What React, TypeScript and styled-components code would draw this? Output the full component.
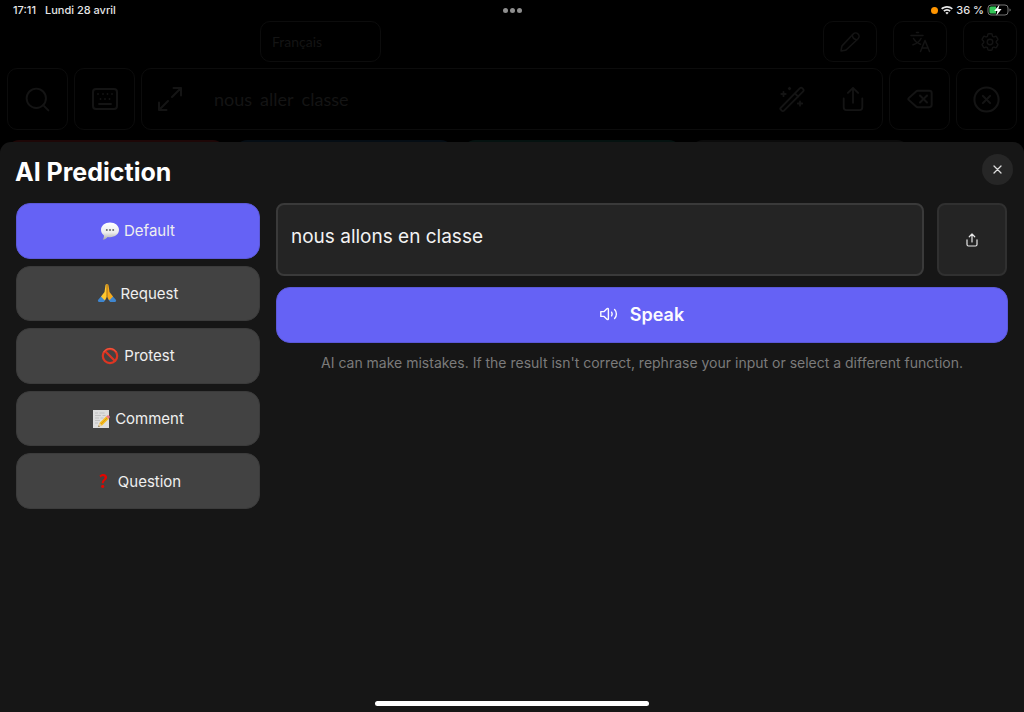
import React, { useState } from "react";
import styled, { createGlobalStyle } from "styled-components";
import { Search, Delete, CircleX } from "lucide-react";
import { HiOutlineCog6Tooth } from "react-icons/hi2";

const GlobalStyle = createGlobalStyle`
  * { box-sizing: border-box; }
  html, body { margin: 0; background: #000; }
  body { font-family: Inter, "Liberation Sans", sans-serif; color: #fff; }
  button, input, select, textarea { font: inherit; color: inherit; }
  svg { display: block; flex: none; }
`;

const Screen = styled.div`
  min-height: 100vh;
  display: flex;
  flex-direction: column;
  background: #000;
`;

const StatusBar = styled.header`
  display: grid;
  grid-template-columns: 1fr auto 1fr;
  align-items: center;
  height: 21px;
  padding: 0 13px 1px;
  font-size: 11px;
  line-height: 14px;
  font-weight: 500;
  color: #e6e6e6;
`;

const StatusGroup = styled.div<{ $end?: boolean; $gap: number }>`
  display: flex;
  align-items: center;
  gap: ${(p) => p.$gap}px;
  justify-content: ${(p) => (p.$end ? "flex-end" : "flex-start")};
`;

const Dots = styled.div`
  display: flex;
  gap: 2px;
`;

const Dot = styled.i<{ $size: number; $color: string }>`
  width: ${(p) => p.$size}px;
  height: ${(p) => p.$size}px;
  border-radius: 50%;
  background: ${(p) => p.$color};
`;

const Backdrop = styled.div`
  color: #141414;
  font-family: Lato, sans-serif;
`;

const TopTools = styled.div`
  display: grid;
  grid-template-columns: 1fr auto;
  align-items: center;
  padding: 0 7px 0 260px;
`;

const LanguageSelect = styled.select`
  appearance: none;
  width: 121px;
  height: 41px;
  padding: 0 11px;
  border: 1px solid #0c0c0c;
  border-radius: 10px;
  background: transparent;
  font-size: 14px;
`;

const ToolGroup = styled.div`
  display: flex;
  gap: 16px;
`;

const ToolButton = styled.button`
  width: 54px;
  height: 41px;
  display: grid;
  place-items: center;
  padding: 0;
  border: 1px solid #0c0c0c;
  border-radius: 10px;
  background: transparent;
`;

const ComposeRow = styled.div`
  display: flex;
  gap: 6px;
  padding: 6px 7px 0;
`;

const SquareButton = styled(ToolButton)`
  width: 61px;
  height: 62px;
`;

const Sentence = styled.div`
  flex: 1;
  height: 62px;
  display: flex;
  align-items: center;
  padding: 0 16px;
  border: 1px solid #0c0c0c;
  border-radius: 10px;
`;

const Words = styled.div`
  flex: 1;
  display: flex;
  gap: 8px;
  padding-left: 32px;
  font-size: 18px;
`;

const BareButton = styled.button`
  display: block;
  padding: 0;
  border: 0;
  background: none;
`;

const SentenceActions = styled.div`
  display: flex;
  gap: 35px;
`;

const Tiles = styled.div`
  display: grid;
  grid-template-columns: repeat(4, 218px) 1fr;
  gap: 10px;
  height: 12px;
  padding: 0 7px;
  margin: 10px 0 -10px;
`;

const Tile = styled.div<{ $color: string }>`
  border-radius: 12px 12px 0 0;
  background: ${(p) => p.$color};
`;

const Sheet = styled.main`
  flex: 1;
  position: relative;
  display: flex;
  flex-direction: column;
  border-radius: 11px 11px 0 0;
  background: #161616;
`;

const SheetHeader = styled.div`
  display: flex;
  justify-content: space-between;
  align-items: flex-start;
  padding: 12px 11px 0 15px;
  height: 61px;
`;

const Title = styled.h1`
  margin: 0;
  padding-top: 2px;
  font-size: 25px;
  line-height: 32px;
  font-weight: 700;
`;

const CloseButton = styled.button`
  width: 31px;
  height: 31px;
  display: grid;
  place-items: center;
  padding: 0;
  border: 0;
  border-radius: 50%;
  background: #262626;
  color: #dcdcdc;
`;

const Content = styled.div`
  flex: 1;
  display: grid;
  grid-template-columns: 1fr 3fr;
  gap: 16px;
  align-items: start;
  padding: 0 16px;
`;

const Modes = styled.nav`
  display: grid;
  grid-template-rows: repeat(5, 1fr);
  gap: 7px;
  height: 306px;
`;

const ModeButton = styled.button<{ $active: boolean }>`
  display: flex;
  align-items: center;
  justify-content: center;
  gap: 4px;
  padding: 0 1px 0 0;
  border: 1px solid ${(p) => (p.$active ? "#5b58d8" : "#3b3b3b")};
  border-radius: 14px;
  background: ${(p) => (p.$active ? "#6562f5" : "#424242")};
  color: #efefef;
  font-size: 15px;
`;

const Panel = styled.section`
  display: flex;
  flex-direction: column;
`;

const ResultRow = styled.div`
  display: flex;
  gap: 13px;
  padding-right: 1px;
`;

const Result = styled.textarea`
  flex: 1;
  min-width: 0;
  height: 73px;
  padding: 20px 13px;
  border: 2px solid #3a3a3a;
  border-radius: 8px;
  outline: 0;
  resize: none;
  overflow: hidden;
  background: #242424;
  color: #f2f2f2;
  font-size: 19px;
  line-height: 24px;
`;

const ShareButton = styled.button`
  width: 70px;
  height: 73px;
  display: grid;
  place-items: center;
  padding: 0;
  border: 2px solid #303030;
  border-radius: 8px;
  background: #242424;
  color: #e8e8e8;
`;

const SpeakButton = styled.button`
  display: flex;
  align-items: center;
  justify-content: center;
  gap: 12px;
  height: 56px;
  margin-top: 11px;
  padding: 0 0 2px;
  border: 1px solid #5b58d8;
  border-radius: 14px;
  background: #6562f5;
  color: #fbfbff;
  font-size: 18px;
  font-weight: 600;
`;

const Notice = styled.p`
  margin: 10px 0 0;
  color: #7b7b7b;
  font-size: 14px;
  line-height: 20px;
  text-align: center;
`;

const HomeIndicator = styled.div`
  width: 274px;
  height: 5px;
  margin: 0 auto 6px;
  border-radius: 3px;
  background: #fff;
`;

const line = {
  fill: "none",
  stroke: "currentColor",
  strokeLinecap: "round" as const,
  strokeLinejoin: "round" as const,
};

const WifiIcon = () => (
  <svg width="12" height="9" viewBox="0 0 24 18" fill="currentColor">
    <path d="M12 0C7.400 0 3.300 1.800.2 4.700l2.300 2.400A13.700 13.700 0 0 1 12 3.300c3.700 0 7 1.400 9.500 3.800l2.300-2.400A17 17 0 0 0 12 0z" />
    <path d="M12 6a11 11 0 0 0-7.500 3l2.300 2.400A7.600 7.600 0 0 1 12 9.300c2 0 3.800.800 5.200 2.100L19.500 9A11 11 0 0 0 12 6z" />
    <path d="M12 12a5 5 0 0 0-3.300 1.300L12 17l3.300-3.700A5 5 0 0 0 12 12z" />
  </svg>
);

const BatteryIcon = () => (
  <svg width="24" height="12" viewBox="0 0 24 12">
    <rect x="1" y="1" width="20" height="10" rx="3" fill="none" stroke="#777" />
    <path d="M22.500 4.500v3c.8-.3 1.200-.8 1.200-1.500s-.4-1.200-1.200-1.500z" fill="#777" />
    <path d="M4 2.400h5v7.200H4A1.600 1.600 0 0 1 2.400 8V4A1.600 1.600 0 0 1 4 2.400z" fill="#34c759" />
    <path d="M12.500 .6 7.200 6.900h3.200l-1 4.700 5.200-6.500h-3.200z" fill="#fff" />
  </svg>
);

const PencilIcon = () => (
  <svg width="22" height="22" viewBox="0 0 24 24" strokeWidth="1.700" {...line}>
    <path d="M2.200 21.800l.8-4.600c.1-.6.400-1.100.8-1.500L15.500 3.200a3.700 3.700 0 0 1 5.300 5.300L8.300 20.200c-.4.4-.9.700-1.500.8z" />
    <path d="M14.500 4.500c.2 2.800 2.200 4.800 5 5" />
  </svg>
);

const TranslateIcon = () => (
  <svg width="22" height="22" viewBox="0 0 22 22" strokeWidth="1.500" {...line}>
    <path d="M7.500 1.500h2M2 4.500h12M4.500 7.500c1.500 2.800 4.200 4.800 7 5.800M12 7.500c-1.500 3-4.500 5.200-8 6.300M11.500 20.500l4.500-11 4.500 11M13 17h6" />
  </svg>
);

const KeyboardIcon = () => (
  <svg width="26" height="22" viewBox="0 0 26 22" strokeWidth="2" {...line}>
    <rect x="1" y="1" width="24" height="20" rx="3" />
    <path d="M6 6h.01M11 6h.01M15.500 6h.01M20 6h.01M8.500 11h.01M13 11h.01M17.500 11h.01M7 16h12" strokeWidth="1.800" />
  </svg>
);

const ExpandIcon = () => (
  <svg width="24" height="24" viewBox="0 0 24 24" strokeWidth="2" {...line}>
    <path d="M15.500 1H23v7.500M23 1l-9 9M1 15.500V23h7.500M1 23l9-9" />
  </svg>
);

const WandIcon = () => (
  <svg width="26" height="26" viewBox="0 0 26 26" strokeWidth="1.800" {...line}>
    <path d="M1.600 22 21 2.200a1.500 1.500 0 0 1 2.200 0l1 1a1.500 1.500 0 0 1 0 2.200L5 24.600a1.500 1.500 0 0 1-2.200 0l-1.200-1.200a1 1 0 0 1 0-1.400zM16 7.500l3.200 3.200M4.500 5.800v4.400M2.300 8h4.400M21 15.300v4.400M18.800 17.500h4.400M10.500 1.700v1.600M9.700 2.500h1.600" />
  </svg>
);

const ShareIcon = ({ size, weight }: { size: number; weight: number }) => (
  <svg width={size} height={size} viewBox="0 0 24 28" strokeWidth={weight} {...line}>
    <path d="M2 13.500V23a3 3 0 0 0 3 3h14a3 3 0 0 0 3-3v-9.500M12 18V2M6.500 7.500 12 2l5.500 5.500" />
  </svg>
);

const CloseIcon = () => (
  <svg width="9" height="9" viewBox="0 0 9 9" strokeWidth="1.300" {...line}>
    <path d="M1 1l7 7M8 1 1 8" />
  </svg>
);

const SpeakerIcon = () => (
  <svg width="18" height="16" viewBox="0 0 18 16" strokeWidth="1.400" {...line}>
    <path d="M.8 5.600v4.800h3.300l2.800 2.900c.6.5 1.500.2 1.500-.6V3.300c0-.8-.9-1.100-1.500-.6L4.100 5.600zM11.600 6.200c.7 1.100.7 2.500 0 3.600M14.600 3.600c2.400 2.500 2.400 6.300 0 8.800" />
  </svg>
);

const BubbleEmoji = () => (
  <svg width="20" height="20" viewBox="0 0 20 20">
    <defs>
      <linearGradient id="bubble" x1="0" y1="0" x2="0" y2="1">
        <stop offset="0" stopColor="#fff" />
        <stop offset=".6" stopColor="#ececec" />
        <stop offset="1" stopColor="#a9a9a9" />
      </linearGradient>
    </defs>
    <path d="M10 1.500c5 0 9 3.200 9 7.300s-4 7.400-9 7.400c-.8 0-1.600-.1-2.300-.3-1.300 1.600-3.200 2.700-5 2.800.9-1.200 1.300-2.500 1.300-4.200C2.200 13.200 1 11.200 1 8.800c0-4.100 4-7.300 9-7.300z" fill="url(#bubble)" />
    <g fill="#686868">
      <circle cx="6.800" cy="9" r="1" />
      <circle cx="10" cy="9" r="1" />
      <circle cx="13.200" cy="9" r="1" />
    </g>
  </svg>
);

const PrayEmoji = () => (
  <svg width="20" height="20" viewBox="0 0 20 20">
    <path d="M.8 17.200 4.500 13l4.300 3.600-2 2.300H1.500z" fill="#3f86cf" />
    <path d="M19.200 17.200 15.500 13l-4.300 3.600 2 2.300h5.300z" fill="#3f86cf" />
    <path d="M9.800 1c-1.200 0-1.300 1-1.500 2.500L7.500 9 4 13.600l3.500 3.600c1.700-1.300 2.300-3 2.300-5z" fill="#ffc72e" />
    <path d="M10.200 1c1.200 0 1.300 1 1.500 2.500l.8 5.500 3.500 4.600-3.500 3.600c-1.700-1.300-2.300-3-2.300-5z" fill="#f5aa1c" />
    <path d="M10 1.500V13" stroke="#c97c10" strokeWidth=".7" />
  </svg>
);

const ProhibitedEmoji = () => (
  <svg width="20" height="20" viewBox="0 0 20 20" fill="none">
    <circle cx="10" cy="10" r="7.200" stroke="#dc3522" strokeWidth="2.200" />
    <path d="M5 5l10 10" stroke="#dc3522" strokeWidth="2.200" />
    <path d="M3.500 6.200a7.700 7.700 0 0 1 13 0" stroke="#f4694f" strokeWidth=".8" />
  </svg>
);

const MemoEmoji = () => (
  <svg width="20" height="20" viewBox="0 0 20 20">
    <path d="M2 1h16v18H2z" fill="#dedede" />
    <path d="M4 4h3M8.500 4h5M4 6.500h6M11.500 6.500h3M4 9h4M9.500 9h3M4 11.500h5M4 14h3" stroke="#b4b4b4" strokeWidth=".7" />
    <path d="M7.300 17.800 8.500 14l6.600-6.500 2.500 2.400L11 16.500z" fill="#f5bd1f" />
    <path d="M9.800 15.300 16.300 8.700" stroke="#d18c10" strokeWidth=".7" />
    <path d="M15.100 7.500l1.200-1c1.400-.8 3 .8 2.300 2.200l-1 1.200z" fill="#ee7a86" />
    <path d="M7.300 17.800 8.500 14l2.500 2.500z" fill="#ecd0a0" />
    <path d="M7.300 17.800l.4-1.400 1 1z" fill="#333" />
  </svg>
);

const QuestionEmoji = () => (
  <svg width="20" height="20" viewBox="0 0 20 20">
    <path d="M5.500 4.600C6.400 3.600 7.900 3 9.300 3c2.300 0 3.800 1.300 3.800 3.300 0 3.100-3.400 3.200-3.400 6H7.800c-.2-3.400 2.700-3.700 2.700-5.700 0-.9-.6-1.400-1.600-1.400-.9 0-1.700.5-2.400 1.300z" fill="#e10600" />
    <circle cx="8.700" cy="15.400" r="1.600" fill="#e10600" />
  </svg>
);

const modes = [
  { label: "Default", Icon: BubbleEmoji },
  { label: "Request", Icon: PrayEmoji },
  { label: "Protest", Icon: ProhibitedEmoji },
  { label: "Comment", Icon: MemoEmoji },
  { label: "Question", Icon: QuestionEmoji },
];

const tiles = ["#1e0707", "#050d14", "#051210", "#0b0b0b"];

export default function App() {
  const [mode, setMode] = useState("Default");
  const [text, setText] = useState("nous allons en classe");

  return (
    <Screen>
      <GlobalStyle />
      <StatusBar>
        <StatusGroup $gap={9}>
          <span>17:11</span>
          <span>Lundi 28 avril</span>
        </StatusGroup>
        <Dots>
          <Dot $size={5} $color="#8e8e8e" />
          <Dot $size={5} $color="#8e8e8e" />
          <Dot $size={5} $color="#8e8e8e" />
        </Dots>
        <StatusGroup $gap={3} $end>
          <Dot $size={7} $color="#ff9500" />
          <WifiIcon />
          <span>36 %</span>
          <BatteryIcon />
        </StatusGroup>
      </StatusBar>

      <Backdrop>
        <TopTools>
          <LanguageSelect aria-label="Langue">
            <option>Français</option>
          </LanguageSelect>
          <ToolGroup>
            <ToolButton aria-label="Edit"><PencilIcon /></ToolButton>
            <ToolButton aria-label="Translate"><TranslateIcon /></ToolButton>
            <ToolButton aria-label="Settings"><HiOutlineCog6Tooth size={22} /></ToolButton>
          </ToolGroup>
        </TopTools>
        <ComposeRow>
          <SquareButton aria-label="Search"><Search size={29} strokeWidth={1.6} /></SquareButton>
          <SquareButton aria-label="Keyboard"><KeyboardIcon /></SquareButton>
          <Sentence>
            <BareButton aria-label="Expand"><ExpandIcon /></BareButton>
            <Words>
              <span>nous</span>
              <span>aller</span>
              <span>classe</span>
            </Words>
            <SentenceActions>
              <BareButton aria-label="Predict"><WandIcon /></BareButton>
              <BareButton aria-label="Share"><ShareIcon size={26} weight={2} /></BareButton>
            </SentenceActions>
          </Sentence>
          <SquareButton aria-label="Delete word"><Delete size={28} strokeWidth={1.7} /></SquareButton>
          <SquareButton aria-label="Clear"><CircleX size={29} strokeWidth={1.7} /></SquareButton>
        </ComposeRow>
        <Tiles>
          {tiles.map((color) => (
            <Tile key={color} $color={color} />
          ))}
        </Tiles>
      </Backdrop>

      <Sheet>
        <SheetHeader>
          <Title>AI Prediction</Title>
          <CloseButton aria-label="Close"><CloseIcon /></CloseButton>
        </SheetHeader>
        <Content>
          <Modes>
            {modes.map(({ label, Icon }) => (
              <ModeButton key={label} $active={mode === label} onClick={() => setMode(label)}>
                <Icon />
                {label}
              </ModeButton>
            ))}
          </Modes>
          <Panel>
            <ResultRow>
              <Result aria-label="Prediction" rows={1} value={text} spellCheck={false} onChange={(e) => setText(e.target.value)} />
              <ShareButton aria-label="Share prediction"><ShareIcon size={14} weight={2.4} /></ShareButton>
            </ResultRow>
            <SpeakButton>
              <SpeakerIcon />
              Speak
            </SpeakButton>
            <Notice>
              AI can make mistakes. If the result isn't correct, rephrase your input or select a different function.
            </Notice>
          </Panel>
        </Content>
        <HomeIndicator />
      </Sheet>
    </Screen>
  );
}
